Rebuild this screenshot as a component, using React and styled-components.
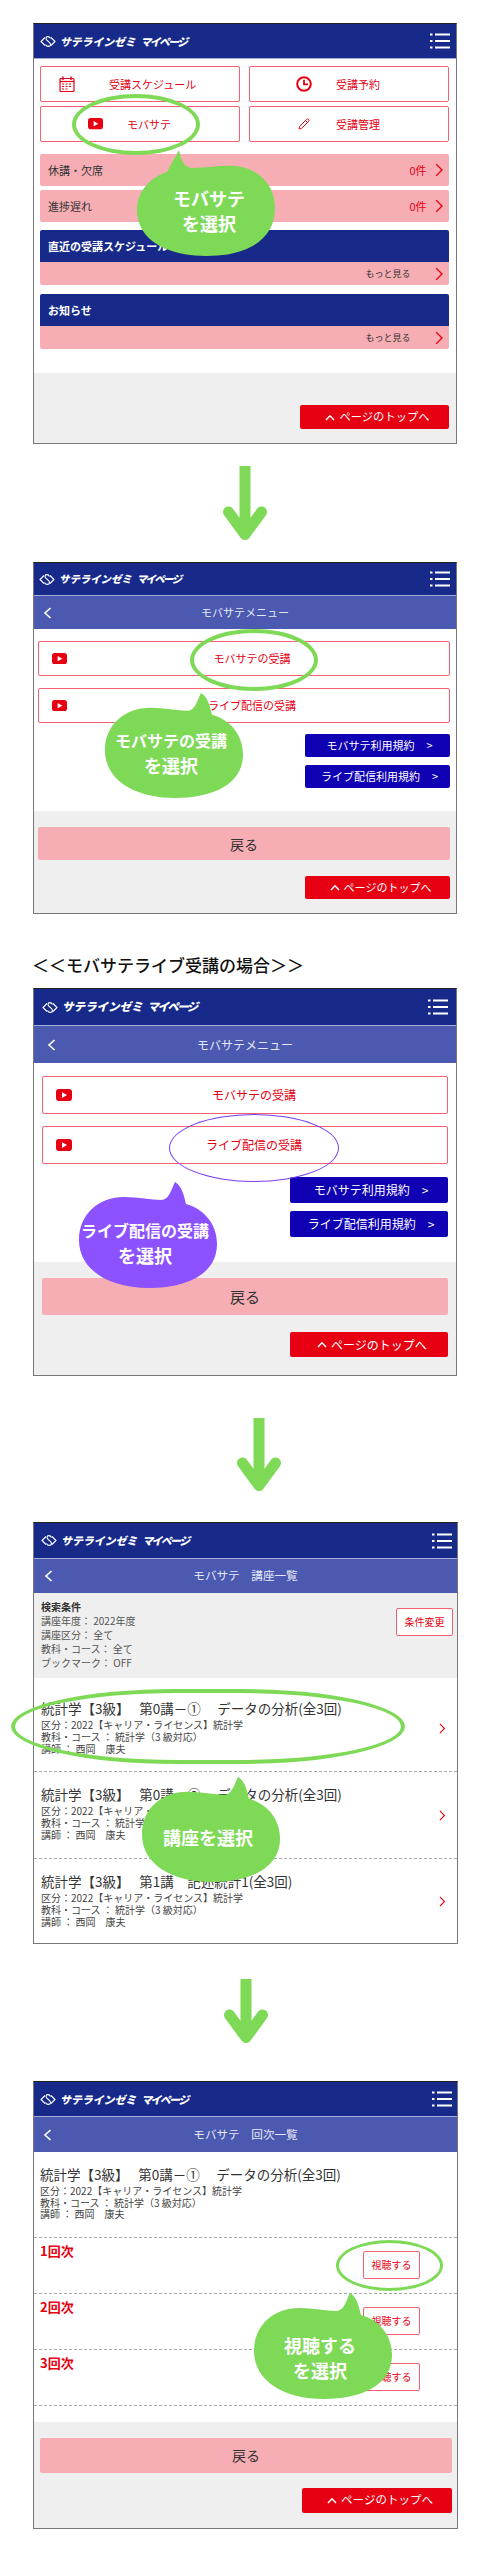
import React from 'react'
import styled, {createGlobalStyle} from 'styled-components'
import {Pencil} from 'lucide-react'

const GlobalStyle = createGlobalStyle`
  * { box-sizing: border-box; }
  body {
    margin: 0;
    background: #fff;
    font-family: "Noto Sans CJK JP", "Noto Sans", sans-serif;
    color: #333;
  }
`

const NAVY = '#172a8a'
const INDIGO = '#4b5ab0'
const PINK = '#f6adb3'
const RED = '#e60012'
const LINE_RED = '#f4606e'
const GREEN = '#7ed957'
const PURPLE = '#8c52ff'

const Page = styled.div`
  width: 486px;
  min-height: 2560px;
  padding-top: 23px;
  background: #fff;
`

const Screen = styled.section`
  position: relative;
  width: ${p => p.$width || 424}px;
  margin: ${p => p.$top || 0}px 0 0 33px;
  border: 1px solid #777;
  border-top-color: #222;
  background: #fff;
`

const TopBar = styled.header`
  display: flex;
  align-items: center;
  justify-content: space-between;
  height: ${p => p.$height}px;
  padding: 0 ${p => p.$right}px 0 ${p => p.$left}px;
  background: ${NAVY};
  border-bottom: 1px solid #a4acd8;
`

const Logo = styled.div`
  display: flex;
  align-items: center;
  gap: 4px;
`

const LogoText = styled.span`
  font-size: ${p => p.$size}px;
  font-weight: 900;
  line-height: 1;
  color: #fff;
  font-style: italic;
  white-space: pre;
`

const LogoTail = styled.span`
  margin-left: 5px;
  letter-spacing: -1.6px;
`

const SubBar = styled.div`
  position: relative;
  display: flex;
  align-items: center;
  justify-content: center;
  height: ${p => p.$height}px;
  background: ${INDIGO};
  color: #e6e8f5;
  font-size: ${p => p.$size}px;
  line-height: 1;
`

const BackMark = styled.svg`
  position: absolute;
  left: ${p => p.$left}px;
  top: 50%;
  margin-top: -8px;
`

const Body = styled.div`
  padding: ${p => p.$pad};
`

const TileGrid = styled.div`
  display: grid;
  grid-template-columns: 200px 200px;
  grid-auto-rows: 36px;
  gap: 4px 9px;
  margin-bottom: 12px;
`

const Tile = styled.a`
  display: flex;
  align-items: center;
  gap: ${p => p.$gap}px;
  padding-left: ${p => p.$inset}px;
  border: 1px solid ${LINE_RED};
  border-radius: 2px;
  color: ${RED};
  font-size: 11px;
  line-height: 1;
`

const TileIcon = styled.span`
  display: flex;
  justify-content: center;
  width: 16px;
`

const StatusRow = styled.a`
  display: flex;
  align-items: center;
  height: 32px;
  margin-bottom: 4px;
  padding: 0 6px 0 8px;
  background: ${PINK};
  border-radius: 2px;
  font-size: 11px;
`

const StatusCount = styled.span`
  margin-left: auto;
  margin-right: 8px;
  color: ${RED};
`

const InfoBlock = styled.div`
  margin-top: ${p => p.$top}px;
  border-radius: 2px;
  overflow: hidden;
`

const InfoHead = styled.h3`
  display: flex;
  align-items: center;
  height: 32px;
  margin: 0;
  padding-left: 8px;
  background: ${NAVY};
  color: #fff;
  font-size: 11px;
  font-weight: 700;
`

const InfoMore = styled.a`
  display: flex;
  align-items: center;
  justify-content: flex-end;
  gap: 24px;
  height: 23px;
  padding-right: 6px;
  background: ${PINK};
  font-size: 9px;
`

const WideLink = styled.a`
  display: flex;
  align-items: center;
  height: ${p => p.$height}px;
  margin-bottom: ${p => p.$gap}px;
  padding: 0 ${p => p.$right}px 0 ${p => p.$left}px;
  border: 1px solid ${LINE_RED};
  border-radius: 2px;
  color: ${RED};
  font-size: ${p => p.$size}px;
  line-height: 1;
`

const WideLabel = styled.span`
  flex: 1;
  text-align: center;
`

const TermsLink = styled.a`
  display: flex;
  align-items: center;
  justify-content: center;
  gap: 12px;
  width: ${p => p.$width}px;
  height: ${p => p.$height}px;
  margin: 0 0 8px auto;
  padding-left: 4px;
  background: #1000b4;
  border-radius: 2px;
  color: #fff;
  font-size: ${p => p.$size}px;
  line-height: 1;
`

const Foot = styled.footer`
  display: flex;
  flex-direction: column;
  padding: ${p => p.$pad};
  background: #efefef;
`

const BackBar = styled.a`
  display: flex;
  align-items: center;
  justify-content: center;
  height: ${p => p.$height}px;
  margin-bottom: ${p => p.$gap}px;
  background: ${PINK};
  border-radius: 2px;
  color: #333;
  font-size: ${p => p.$size}px;
`

const TopLink = styled.a`
  display: flex;
  align-items: center;
  justify-content: center;
  gap: 4px;
  width: ${p => p.$width}px;
  height: ${p => p.$height}px;
  margin-left: auto;
  padding-left: 6px;
  background: ${RED};
  border-radius: 2px;
  color: #fff;
  font-size: ${p => p.$size}px;
  line-height: 1;
`

const CaseHeading = styled.h2`
  margin: 39px 0 11px 32px;
  font-size: 17px;
  font-weight: 500;
  line-height: 24px;
  color: #111;
`

const ArrowBox = styled.div`
  height: ${p => p.$height}px;
  margin: ${p => p.$top}px 0 0 ${p => p.$center - 22}px;
`

const SearchPanel = styled.div`
  display: flex;
  justify-content: space-between;
  align-items: flex-start;
  height: 85px;
  padding: 7px 4px 0 7px;
  background: #efefef;
  font-size: 10px;
  line-height: 14px;
  color: #555;
`

const SearchTitle = styled.div`
  font-weight: 700;
  color: #333;
`

const SmallButton = styled.a`
  display: flex;
  align-items: center;
  justify-content: center;
  width: 57px;
  height: 28px;
  margin-top: ${p => p.$top}px;
  background: #fff;
  border: 1px solid ${LINE_RED};
  border-radius: 2px;
  color: ${RED};
  font-size: 10px;
  line-height: 1;
`

const CourseList = styled.div`
  padding-top: 8px;
`

const CourseRow = styled.a`
  display: flex;
  align-items: center;
  justify-content: space-between;
  height: ${p => p.$height}px;
  padding: 0 11px 0 7px;
  border-bottom: ${p => (p.$last ? 'none' : '1px dashed #aaa')};
`

const CourseInfo = styled.div`
  align-self: flex-start;
  padding-top: 12px;
`

const CourseTitle = styled.div`
  height: 21px;
  font-size: 13.5px;
  line-height: 20px;
  color: #333;
  white-space: pre;
`

const CourseMeta = styled.div`
  font-size: 10px;
  line-height: ${p => p.$line || 12}px;
  color: #444;
  white-space: pre;
`

const CourseBlock = styled.div`
  padding: 12px 6px 17px;
  border-bottom: 1px dashed #aaa;
`

const LessonRow = styled.div`
  display: flex;
  justify-content: space-between;
  align-items: flex-start;
  height: 56px;
  padding: 6px 37px 0 6px;
  border-bottom: 1px dashed #aaa;
`

const LessonName = styled.div`
  font-size: 13px;
  font-weight: 700;
  line-height: 14px;
  color: ${RED};
`

const Ring = styled.div`
  position: absolute;
  left: ${p => p.$x}px;
  top: ${p => p.$y}px;
  width: ${p => p.$w}px;
  height: ${p => p.$h}px;
  border: ${p => p.$stroke || 4}px solid ${p => p.$color || GREEN};
  border-radius: ${p => p.$radius || '50%'};
  pointer-events: none;
`

const Bubble = styled.div`
  position: absolute;
  left: ${p => p.$x}px;
  top: ${p => p.$y}px;
  width: 138px;
  height: ${p => p.$h}px;
`

const BubbleShape = styled.svg`
  position: absolute;
  inset: 0;
  width: 100%;
  height: 100%;
`

const BubbleText = styled.div`
  position: absolute;
  inset: ${p => p.$offset || 15}px 0 0 0;
  display: flex;
  flex-direction: column;
  align-items: center;
  justify-content: center;
  padding: ${p => (p.$tail === 'left' ? '0 0 0 6px' : '0 6px 0 0')};
  color: #fff;
  font-weight: 700;
  line-height: 25px;
  white-space: nowrap;
`

const BubbleLine = styled.span`
  font-size: ${p => p.$size || 18}px;
`

const TAIL_RIGHT = 'M96 0C103 4 105 14 107 22C125 27 138 42 138 62C138 92 108 106 70 106C30 106 0 88 0 58C0 32 20 15 45 15C60 15 72 18 82 18C90 18 92 8 96 0Z'
const TAIL_LEFT = 'M42 0C44 8 46 18 56 18C70 18 85 15 98 16C122 18 138 35 138 58C138 90 110 106 69 106C30 106 0 90 0 60C0 42 12 28 30 22C34 14 38 8 42 0Z'

const Callout = ({x, y, h = 106, color = GREEN, tail = 'right', offset, lines}) => (
  <Bubble $x={x} $y={y} $h={h}>
    <BubbleShape viewBox="0 0 138 106" preserveAspectRatio="none">
      <path d={tail === 'left' ? TAIL_LEFT : TAIL_RIGHT} fill={color} />
    </BubbleShape>
    <BubbleText $tail={tail} $offset={offset}>
      {lines.map(l => (
        <BubbleLine key={l.text} $size={l.size}>{l.text}</BubbleLine>
      ))}
    </BubbleText>
  </Bubble>
)

const FlowArrow = ({top, height, center}) => (
  <ArrowBox $top={top} $height={height} $center={center}>
    <svg width="44" height={height} viewBox={`0 0 44 ${height}`}>
      <rect x="16.5" y="0" width="11" height={height - 6} fill={GREEN} />
      <path
        d={`M5.5 ${height - 28}L22 ${height - 5.5}L38.5 ${height - 28}`}
        fill="none"
        stroke={GREEN}
        strokeWidth="11"
        strokeLinecap="round"
        strokeLinejoin="round"
      />
    </svg>
  </ArrowBox>
)

const LogoMark = () => (
  <svg width="16" height="13" viewBox="0 0 16 13" fill="none" stroke="#fff" strokeWidth="1.1">
    <path d="M5 2.5L1 6.5L5 10.5" />
    <path d="M11 2.5L15 6.5L11 10.5" />
    <path d="M10.5 3.5C9.5 1 6 1 6 3.5C6 6 10.5 6.5 10.5 9.5C10.5 12 6.5 12 5.5 9.5" />
  </svg>
)

const MenuMark = () => (
  <svg width="20" height="16" viewBox="0 0 20 16" fill="#fff">
    <rect x="0" y="0.5" width="2.5" height="2" />
    <rect x="0" y="7" width="2.5" height="2" />
    <rect x="0" y="13.5" width="2.5" height="2" />
    <rect x="5" y="0.5" width="15" height="2" />
    <rect x="5" y="7" width="15" height="2" />
    <rect x="5" y="13.5" width="15" height="2" />
  </svg>
)

const AppHeader = ({height, left, right, size}) => (
  <TopBar $height={height} $left={left} $right={right}>
    <Logo>
      <LogoMark />
      <LogoText $size={size}>サテラインゼミ<LogoTail>マイページ</LogoTail></LogoText>
    </Logo>
    <MenuMark />
  </TopBar>
)

const SubHeader = ({height, size, left, title}) => (
  <SubBar $height={height} $size={size}>
    <BackMark $left={left} width="9" height="16" viewBox="0 0 9 16" fill="none" stroke="#fff" strokeWidth="1.6">
      <path d="M7.5 3L2 8L7.5 13" />
    </BackMark>
    {title}
  </SubBar>
)

const VideoMark = ({size = 15}) => (
  <svg width={size} height={size * 0.76} viewBox="0 0 16 12">
    <rect width="16" height="12" rx="3" fill={RED} />
    <path d="M6 3.2L11 6L6 8.8Z" fill="#fff" />
  </svg>
)

const CalendarMark = () => (
  <svg width="16" height="16" viewBox="0 0 16 16" fill="none" stroke={RED}>
    <rect x="1" y="2.5" width="14" height="13" rx="1" strokeWidth="1.2" />
    <path d="M4 0.5V4M12 0.5V4" strokeWidth="1.4" />
    <path d="M1 5.5H15" strokeWidth="1.2" />
    <path d="M3 8H5M6.5 8H8.5M10 8H12M3 10.5H5M6.5 10.5H8.5M10 10.5H12M3 13H5M6.5 13H8.5" strokeWidth="1.2" />
  </svg>
)

const ClockMark = () => (
  <svg width="16" height="16" viewBox="0 0 16 16" fill="none" stroke={RED}>
    <circle cx="8" cy="8" r="6.8" strokeWidth="2" />
    <path d="M8 3.8V8.4H12" strokeWidth="1.8" />
  </svg>
)

const Chevron = ({color = RED, size = 14}) => (
  <svg width={size * 0.6} height={size} viewBox="0 0 6 10" fill="none" stroke={color} strokeWidth="1">
    <path d="M0.8 0.8L5 5L0.8 9.2" />
  </svg>
)

const UpMark = ({size}) => (
  <svg width={size} height={size * 0.7} viewBox="0 0 10 7" fill="none" stroke="#fff" strokeWidth="1.5">
    <path d="M1 6L5 1.8L9 6" />
  </svg>
)

const PageTop = ({width, height, size}) => (
  <TopLink $width={width} $height={height} $size={size}>
    <UpMark size={10} />
    ページのトップへ
  </TopLink>
)

const COURSE_META_A = '区分：2022【キャリア・ライセンス】統計学'
const COURSE_META_B = '教科・コース ： 統計学（3 級対応）'
const COURSE_META_C = '講師 ： 西岡　康夫'
const COURSE_TITLE = '統計学【3級】　 第0講－①　 データの分析(全3回)'

const COURSES = [
  {title: COURSE_TITLE, height: 86},
  {title: '統計学【3級】　 第0講－②　 データの分析(全3回)', height: 87},
  {title: '統計学【3級】　 第1講　記述統計1(全3回)', height: 84, last: true},
]

const HomeScreen = () => (
  <Screen>
    <AppHeader height={35} left={6} right={6} size={10.8} />
    <Body $pad="7px 7px 24px 6px">
      <TileGrid>
        <Tile $inset={18} $gap={34}><TileIcon><CalendarMark /></TileIcon>受講スケジュール</Tile>
        <Tile $inset={46} $gap={24}><TileIcon><ClockMark /></TileIcon>受講予約</Tile>
        <Tile $inset={46} $gap={24}><TileIcon><VideoMark /></TileIcon>モバサテ</Tile>
        <Tile $inset={46} $gap={24}><TileIcon><Pencil size={12} color={RED} /></TileIcon>受講管理</Tile>
      </TileGrid>
      <StatusRow>休講・欠席<StatusCount>0件</StatusCount><Chevron /></StatusRow>
      <StatusRow>進捗遅れ<StatusCount>0件</StatusCount><Chevron /></StatusRow>
      <InfoBlock $top={8}>
        <InfoHead>直近の受講スケジュール</InfoHead>
        <InfoMore>もっと見る<Chevron /></InfoMore>
      </InfoBlock>
      <InfoBlock $top={9}>
        <InfoHead>お知らせ</InfoHead>
        <InfoMore>もっと見る<Chevron /></InfoMore>
      </InfoBlock>
    </Body>
    <Foot $pad="32px 7px 14px 6px">
      <PageTop width={149} height={24} size={11.3} />
    </Foot>
    <Ring $x={38} $y={70} $w={128} $h={61} />
    <Callout x={103} y={126} tail="left" lines={[{text: 'モバサテ'}, {text: 'を選択'}]} />
  </Screen>
)

const MenuScreen = () => (
  <Screen $top={22}>
    <AppHeader height={33} left={5} right={6} size={10.4} />
    <SubHeader height={33} size={11} left={9} title="モバサテメニュー" />
    <Body $pad="12px 6px 15px 4px">
      <WideLink $height={35} $gap={12} $left={13} $right={12} $size={11}><VideoMark /><WideLabel>モバサテの受講</WideLabel></WideLink>
      <WideLink $height={35} $gap={11} $left={13} $right={12} $size={11}><VideoMark /><WideLabel>ライブ配信の受講</WideLabel></WideLink>
      <TermsLink $width={145} $height={23} $size={11}>モバサテ利用規約<span>&gt;</span></TermsLink>
      <TermsLink $width={145} $height={23} $size={11}>ライブ配信利用規約<span>&gt;</span></TermsLink>
    </Body>
    <Foot $pad="16px 6px 14px 4px">
      <BackBar $height={33} $gap={16} $size={14}>戻る</BackBar>
      <PageTop width={145} height={23} size={11} />
    </Foot>
    <Ring $x={156} $y={66} $w={128} $h={62} />
    <Callout x={71} y={130} h={105} lines={[{text: 'モバサテの受講', size: 16}, {text: 'を選択'}]} />
  </Screen>
)

const LiveScreen = () => (
  <Screen>
    <AppHeader height={37} left={8} right={8} size={11.5} />
    <SubHeader height={37} size={12} left={13} title="モバサテメニュー" />
    <Body $pad="13px 8px 17px 8px">
      <WideLink $height={38} $gap={12} $left={13} $right={11} $size={12}><VideoMark size={16} /><WideLabel>モバサテの受講</WideLabel></WideLink>
      <WideLink $height={38} $gap={13} $left={13} $right={11} $size={12}><VideoMark size={16} /><WideLabel>ライブ配信の受講</WideLabel></WideLink>
      <TermsLink $width={158} $height={26} $size={12}>モバサテ利用規約<span>&gt;</span></TermsLink>
      <TermsLink $width={158} $height={26} $size={12}>ライブ配信利用規約<span>&gt;</span></TermsLink>
    </Body>
    <Foot $pad="16px 8px 18px 8px">
      <BackBar $height={37} $gap={17} $size={15}>戻る</BackBar>
      <PageTop width={158} height={25} size={12} />
    </Foot>
    <Ring $x={135} $y={125} $w={170} $h={68} $stroke={1.5} $color="#7a3ff0" />
    <Callout x={45} y={193} color={PURPLE} lines={[{text: 'ライブ配信の受講', size: 16}, {text: 'を選択'}]} />
  </Screen>
)

const CourseScreen = () => (
  <Screen $top={31} $width={425}>
    <AppHeader height={36} left={7} right={5} size={10.9} />
    <SubHeader height={34} size={11.6} left={10} title="モバサテ　講座一覧" />
    <SearchPanel>
      <div>
        <SearchTitle>検索条件</SearchTitle>
        <div>講座年度： 2022年度</div>
        <div>講座区分： 全て</div>
        <div>教科・コース： 全て</div>
        <div>ブックマーク： OFF</div>
      </div>
      <SmallButton $top={8}>条件変更</SmallButton>
    </SearchPanel>
    <CourseList>
      {COURSES.map(c => (
        <CourseRow key={c.title} $height={c.height} $last={c.last}>
          <CourseInfo>
            <CourseTitle>{c.title}</CourseTitle>
            <CourseMeta>{COURSE_META_A}</CourseMeta>
            <CourseMeta>{COURSE_META_B}</CourseMeta>
            <CourseMeta>{COURSE_META_C}</CourseMeta>
          </CourseInfo>
          <Chevron size={11} />
        </CourseRow>
      ))}
    </CourseList>
    <Ring $x={-23} $y={166} $w={394} $h={75} $stroke={4.5} $radius="42% / 50%" />
    <Callout x={108} y={254} h={105} lines={[{text: '講座を選択'}]} />
  </Screen>
)

const LessonScreen = () => (
  <Screen $top={38} $width={425}>
    <AppHeader height={35} left={6} right={5} size={10.9} />
    <SubHeader height={35} size={11.6} left={9} title="モバサテ　回次一覧" />
    <CourseBlock>
      <CourseTitle>{COURSE_TITLE}</CourseTitle>
      <CourseMeta $line={11.5}>{COURSE_META_A}</CourseMeta>
      <CourseMeta $line={11.5}>{COURSE_META_B}</CourseMeta>
      <CourseMeta $line={11.5}>{COURSE_META_C}</CourseMeta>
    </CourseBlock>
    {['1回次', '2回次', '3回次'].map(name => (
      <LessonRow key={name}>
        <LessonName>{name}</LessonName>
        <SmallButton $top={7}>視聴する</SmallButton>
      </LessonRow>
    ))}
    <Body $pad="0 0 16px" />
    <Foot $pad="16px 5px 15px 6px">
      <BackBar $height={35} $gap={15} $size={14}>戻る</BackBar>
      <PageTop width={150} height={25} size={11.5} />
    </Foot>
    <Ring $x={302} $y={158} $w={107} $h={51} $stroke={3} />
    <Callout x={220} y={211} offset={24} lines={[{text: '視聴する'}, {text: 'を選択'}]} />
  </Screen>
)

const App = () => (
  <Page>
    <GlobalStyle />
    <HomeScreen />
    <FlowArrow top={22} height={74} center={245} />
    <MenuScreen />
    <CaseHeading>＜＜モバサテライブ受講の場合＞＞</CaseHeading>
    <LiveScreen />
    <FlowArrow top={42} height={73} center={259} />
    <CourseScreen />
    <FlowArrow top={35} height={64} center={245.5} />
    <LessonScreen />
  </Page>
)

export default App
